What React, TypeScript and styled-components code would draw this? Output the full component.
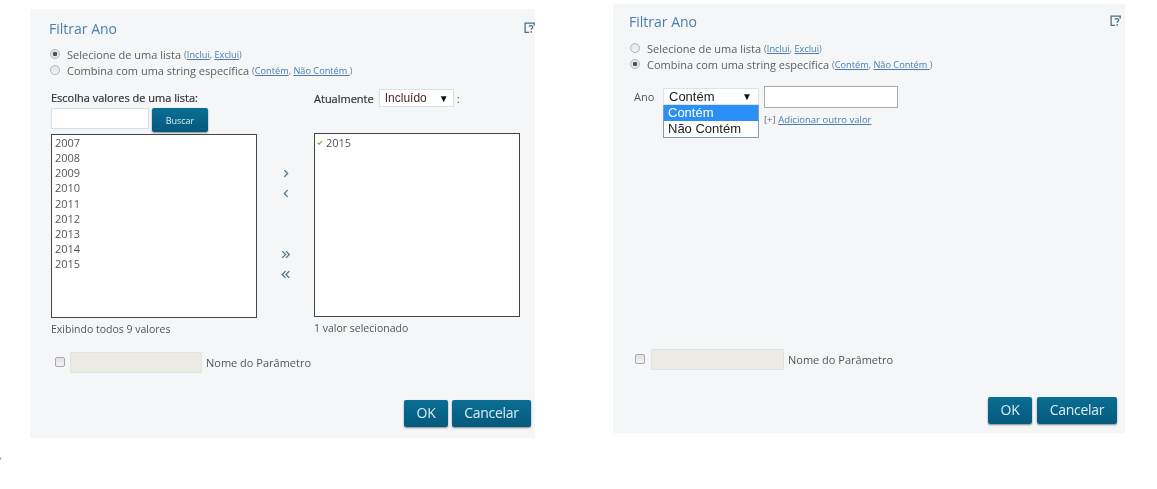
import React from 'react';
import styled, { createGlobalStyle } from 'styled-components';

const GlobalStyle = createGlobalStyle`
  html, body {
    margin: 0;
    padding: 0;
    background: #fff;
    font-family: "Open Sans", "Liberation Sans", sans-serif;
  }
`;

const HelpIcon = () => (
  <svg viewBox="0 0 11 12" width="11" height="12" fill="none" stroke="#4f6f86">
    <path d="M10.2 3.6V1.1H1.1v9.2h4" strokeWidth="1.3" />
    <path d="M5 4.4c.5-1.1 3.8-1.1 3.8.7 0 1.2-1.6 1.2-1.6 2.6M7.2 9v1.8" strokeWidth="1.3" />
  </svg>
);

const Chevron = ({ dir, double }: { dir: 'right' | 'left'; double?: boolean }) => (
  <svg viewBox="0 0 12 10" width="10" height="9" fill="none" stroke="#4a7590" strokeWidth="1.5">
    {dir === 'right' ? (
      <>
        <path d={double ? 'M1.5 1l4 4-4 4' : 'M4 1l4 4-4 4'} />
        {double && <path d="M6 1l4 4-4 4" />}
      </>
    ) : (
      <>
        <path d={double ? 'M5.5 1l-4 4 4 4' : 'M8 1L4 5l4 4'} />
        {double && <path d="M10 1L6 5l4 4" />}
      </>
    )}
  </svg>
);

const Check = () => (
  <svg viewBox="0 0 6 5" width="6" height="5" fill="none" stroke="#69a83c" strokeWidth="1.1">
    <path d="M.6 2.6l1.5 1.5L5.2.8" />
  </svg>
);

const RadioOptions = ({ listSelected, top }: { listSelected: boolean; top: number }) => (
  <Options $top={top}>
    <OptionRow>
      <Radio type="radio" readOnly checked={listSelected} />
      Selecione de uma lista
      <Small>
        (<SmallLink>Inclui</SmallLink>, <SmallLink>Exclui</SmallLink>)
      </Small>
    </OptionRow>
    <OptionRow>
      <Radio type="radio" readOnly checked={!listSelected} />
      Combina com uma string específica
      <Small>
        (<SmallLink>Contém</SmallLink>, <SmallLink>Não Contém </SmallLink>)
      </Small>
    </OptionRow>
  </Options>
);

const ParamRow = ({ wide }: { wide?: boolean }) => (
  <Param>
    <ParamCheck type="checkbox" readOnly $wide={wide} />
    <ParamInput $wide={wide} />
    <ParamLabel>Nome do Parâmetro</ParamLabel>
  </Param>
);

const Footer = ({ wide }: { wide?: boolean }) => (
  <Buttons $wide={wide}>
    <PrimaryButton $width={44}>OK</PrimaryButton>
    <PrimaryButton $width={wide ? 80 : 79}>Cancelar</PrimaryButton>
  </Buttons>
);

const years = ['2007', '2008', '2009', '2010', '2011', '2012', '2013', '2014', '2015'];

const App = () => (
  <Page>
    <GlobalStyle />
    <StrayMark />
    <LeftPanel>
      <Header>
        <Title>Filtrar Ano</Title>
        <HelpIcon />
      </Header>
      <RadioOptions listSelected top={8} />
      <Columns>
        <ListColumn>
          <ColumnHead>Escolha valores de uma lista:</ColumnHead>
          <SearchRow>
            <SearchInput />
            <SearchButton>Buscar</SearchButton>
          </SearchRow>
          <ListBox>
            {years.map((y) => (
              <ListItem key={y}>{y}</ListItem>
            ))}
          </ListBox>
          <Caption>Exibindo todos 9 valores</Caption>
        </ListColumn>
        <Mover>
          <MoverGroup>
            <Chevron dir="right" />
            <Chevron dir="left" />
          </MoverGroup>
          <MoverGroup>
            <Chevron dir="right" double />
            <Chevron dir="left" double />
          </MoverGroup>
        </Mover>
        <ListColumn>
          <CurrentRow>
            <ColumnHead>Atualmente</ColumnHead>
            <ModeSelect>
              Incluído
              <Arrow>▼</Arrow>
            </ModeSelect>
            <Colon>:</Colon>
          </CurrentRow>
          <ListBox>
            <SelectedItem>
              <Check />
              2015
            </SelectedItem>
          </ListBox>
          <Caption>1 valor selecionado</Caption>
        </ListColumn>
      </Columns>
      <ParamRow />
      <Footer />
    </LeftPanel>

    <RightPanel>
      <Header>
        <Title>Filtrar Ano</Title>
        <HelpIcon />
      </Header>
      <RadioOptions listSelected={false} top={9} />
      <MatchRow>
        <MatchLabel>Ano</MatchLabel>
        <DropdownWrap>
          <MatchSelect>
            Contém
            <Arrow>▼</Arrow>
          </MatchSelect>
          <DropdownMenu>
            <DropdownItem $active>Contém</DropdownItem>
            <DropdownItem>Não Contém</DropdownItem>
          </DropdownMenu>
        </DropdownWrap>
        <MatchColumn>
          <MatchInput />
          <AddLine>
            [+] <SmallLink>Adicionar outro valor</SmallLink>
          </AddLine>
        </MatchColumn>
      </MatchRow>
      <ParamRow wide />
      <Footer wide />
    </RightPanel>
  </Page>
);

const Page = styled.div`
  position: relative;
  width: 1157px;
  height: 489px;
  overflow: hidden;
  display: flex;
  align-items: flex-start;
  gap: 78px;
  padding: 4px 0 0 30px;
  box-sizing: border-box;
  background: #fff;
  filter: blur(0.35px);
`;

const StrayMark = styled.div`
  position: absolute;
  left: 0;
  top: 457px;
  width: 1px;
  height: 3px;
  background: #9db4cf;
`;

const Panel = styled.section`
  height: 429px;
  box-sizing: border-box;
  background: #f4f6f8;
  display: flex;
  flex-direction: column;
  color: #555;
  font-size: 11px;
`;

const LeftPanel = styled(Panel)`
  width: 505px;
  margin-top: 5px;
  padding: 9px 4px 11px 19px;
`;

const RightPanel = styled(Panel)`
  width: 512px;
  padding: 7px 8px 9px 16px;
`;

const Header = styled.header`
  display: flex;
  justify-content: space-between;
  align-items: center;
  height: 20px;
  margin-right: -4px;
`;

const Title = styled.h2`
  margin: 0;
  font-size: 14px;
  font-weight: 400;
  color: #4a7eb0;
`;

const Options = styled.div<{ $top: number }>`
  margin-top: ${(p) => p.$top}px;
  margin-left: 1px;
  display: flex;
  flex-direction: column;
`;

const OptionRow = styled.label`
  display: flex;
  align-items: center;
  height: 16px;
  font-size: 11px;
  white-space: pre;
  color: #5a5f63;
`;

const Radio = styled.input`
  appearance: none;
  width: 10px;
  height: 10px;
  margin: 0 7px 0 0;
  border-radius: 50%;
  border: 1px solid #b5b5b5;
  box-sizing: border-box;
  background: linear-gradient(#e4e4e4, #f4f4f4);

  &:checked {
    background: radial-gradient(circle, #555 0 2px, #e8e8e8 2.6px);
  }
`;

const Small = styled.span`
  margin-left: 3px;
  font-size: 9.2px;
  color: #6a7a8a;
  white-space: pre;
`;

const SmallLink = styled.a`
  color: #4a7eb0;
  text-decoration: underline;
`;

const Columns = styled.div`
  display: flex;
  margin-top: 11px;
  margin-left: 2px;
`;

const ListColumn = styled.div`
  width: 206px;
  display: flex;
  flex-direction: column;
`;

const ColumnHead = styled.div`
  font-size: 11px;
  line-height: 17px;
  font-weight: 400;
  color: #333;
  -webkit-text-stroke: 0.2px #333;
`;

const SearchRow = styled.div`
  display: flex;
  gap: 3px;
  margin-top: 2px;
  margin-bottom: 2px;
  height: 24px;
`;

const SearchInput = styled.div`
  width: 98px;
  height: 21px;
  box-sizing: border-box;
  background: #fff;
  border: 1px solid #d5e1ea;
`;

const buttonColor = `
  background: linear-gradient(#0a6e93, #045a7d);
  box-shadow: 0 1px 2px rgba(0, 0, 0, 0.45);
  border: 0;
  border-radius: 2px;
  color: #dcecf3;
  font-family: "Open Sans", sans-serif;
  padding: 0;
`;

const SearchButton = styled.button`
  ${buttonColor}
  width: 56px;
  height: 24px;
  font-size: 9px;
`;

const ListBox = styled.div`
  height: 184px;
  box-sizing: border-box;
  background: #fff;
  border: 1px solid #444;
  padding: 0 3px;
  display: flex;
  flex-direction: column;
  font-size: 11px;
  line-height: 15.12px;
  color: #555;
`;

const ListItem = styled.div``;

const SelectedItem = styled.div`
  display: flex;
  align-items: center;
  gap: 3px;
  margin-left: -1px;
  margin-top: 1px;
`;

const Caption = styled.div`
  margin-top: 4px;
  font-size: 10.5px;
  line-height: 14px;
  color: #555;
`;

const Mover = styled.div`
  width: 57px;
  padding-top: 51px;
  display: flex;
  flex-direction: column;
  align-items: center;
  gap: 52px;
  margin-top: 29px;
`;

const MoverGroup = styled.div`
  display: flex;
  flex-direction: column;
  align-items: center;
  gap: 11px;
`;

const CurrentRow = styled.div`
  display: flex;
  align-items: center;
  height: 18px;
  margin-bottom: 26px;
`;

const selectBox = `
  display: flex;
  align-items: center;
  justify-content: space-between;
  box-sizing: border-box;
  background: #fff;
  font-family: "Liberation Sans", Arial, sans-serif;
  color: #222;
`;

const ModeSelect = styled.div`
  ${selectBox}
  width: 75px;
  height: 18px;
  margin-left: 5px;
  padding: 0 4px 0 5px;
  border: 1px solid #d5e1ea;
  font-size: 12px;
  color: #4a2a2a;
`;

const Arrow = styled.span`
  font-size: 10px;
  color: #111;
`;

const Colon = styled.span`
  margin-left: 3px;
  font-size: 11px;
`;

const Param = styled.div`
  display: flex;
  align-items: center;
  margin-top: 15px;
  margin-left: 6px;
  height: 22px;
`;

const ParamCheck = styled.input<{ $wide?: boolean }>`
  appearance: none;
  width: 10px;
  height: 10px;
  margin: 0 ${(p) => (p.$wide ? 6 : 5)}px 0 0;
  box-sizing: border-box;
  border: 1px solid #a9a9a9;
  border-radius: 2px;
  background: linear-gradient(#e2e2e2, #f2f2f2);
`;

const ParamInput = styled.div<{ $wide?: boolean }>`
  width: ${(p) => (p.$wide ? 133 : 132)}px;
  height: 21px;
  box-sizing: border-box;
  background: #ebebe4;
  border: 1px solid #dde4e8;
`;

const ParamLabel = styled.span`
  margin-left: 4px;
  font-size: 11px;
  color: #555;
`;

const Buttons = styled.div<{ $wide?: boolean }>`
  margin-top: auto;
  display: flex;
  justify-content: flex-end;
  gap: ${(p) => (p.$wide ? 5 : 4)}px;
`;

const PrimaryButton = styled.button<{ $width: number }>`
  ${buttonColor}
  width: ${(p) => p.$width}px;
  height: 27px;
  padding-bottom: 2px;
  font-size: 14px;
  letter-spacing: -0.3px;
`;

const MatchRow = styled.div`
  display: flex;
  align-items: flex-start;
  margin-top: 14px;
  margin-left: 5px;
  height: 247px;
`;

const MatchLabel = styled.span`
  width: 29px;
  margin-top: 3px;
  font-size: 11px;
  line-height: 16px;
  color: #555;
`;

const DropdownWrap = styled.div`
  position: relative;
  width: 96px;
  margin-top: 2px;
`;

const MatchSelect = styled.div`
  ${selectBox}
  height: 17px;
  padding: 0 6px 0 5px;
  border: 1px solid #dbe3ea;
  font-size: 13px;
`;

const DropdownMenu = styled.div`
  position: absolute;
  left: 0;
  top: 17px;
  width: 96px;
  box-sizing: border-box;
  background: #fff;
  border: 1px solid #7f9db9;
  border-top: 0;
  font-family: "Liberation Sans", Arial, sans-serif;
  font-size: 13px;
`;

const DropdownItem = styled.div<{ $active?: boolean }>`
  height: 16px;
  line-height: 15px;
  padding-left: 4px;
  background: ${(p) => (p.$active ? '#2a90f5' : '#fff')};
  color: ${(p) => (p.$active ? '#fff' : '#222')};
`;

const MatchColumn = styled.div`
  margin-left: 5px;
  display: flex;
  flex-direction: column;
`;

const MatchInput = styled.div`
  width: 134px;
  height: 22px;
  box-sizing: border-box;
  background: #fff;
  border: 1px solid #aaa;
`;

const AddLine = styled.div`
  margin-top: 5px;
  font-size: 9.5px;
  line-height: 13px;
  color: #667;
`;

export default App;
